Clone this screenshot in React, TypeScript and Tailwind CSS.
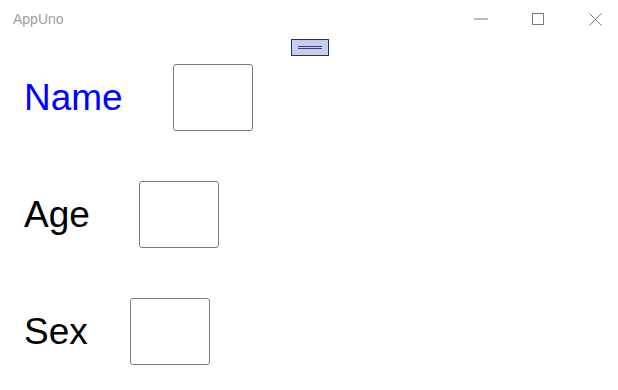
export default function App() {
  const rows = [
    { label: "Name", color: "text-[#0000ff]", w: "w-[99px]" },
    { label: "Age", color: "text-black", w: "w-[65px]" },
    { label: "Sex", color: "text-black", w: "w-[56px]" },
  ];

  return (
    <div className="relative h-[390px] w-[618px] overflow-hidden bg-white font-['Segoe_UI','Liberation_Sans',sans-serif]">
      {/* Title bar */}
      <div className="flex h-[38px] items-center justify-between">
        <span className="pl-[13px] text-[14px] leading-none text-[#a0a0a0]">AppUno</span>
        <div className="flex h-full items-center">
          <div className="flex h-full w-[46px] items-center justify-center">
            <svg width="14" height="2" viewBox="0 0 14 2">
              <path d="M0 1 H14" stroke="#7a7a7a" strokeWidth="1" />
            </svg>
          </div>
          <div className="ml-[11px] flex h-full w-[46px] items-center justify-center">
            <svg width="12" height="12" viewBox="0 0 12 12">
              <rect x="0.5" y="0.5" width="11" height="11" fill="none" stroke="#7a7a7a" strokeWidth="1" />
            </svg>
          </div>
          <div className="ml-[11px] flex h-full w-[46px] items-center justify-center">
            <svg width="13" height="13" viewBox="0 0 13 13">
              <path d="M0.5 0.5 L12.5 12.5 M12.5 0.5 L0.5 12.5" stroke="#7a7a7a" strokeWidth="1" />
            </svg>
          </div>
        </div>
      </div>

      {/* Small centred button */}
      <div className="flex justify-center pt-[1px]">
        <button className="ml-[1px] flex h-[17px] w-[38px] items-center justify-center border border-[#333333] bg-[#c6cdf0]">
          <span className="flex w-[24px] flex-col gap-[1px]">
            <span className="h-[1px] bg-[#3c4270]" />
            <span className="h-[1px] bg-[#3c4270]" />
          </span>
        </button>
      </div>

      {/* Form rows */}
      <div className="flex flex-col gap-[50px] pl-[24px] pt-[8px]">
        {rows.map((r) => (
          <div key={r.label} className="flex items-center gap-[50px]">
            <span className={`${r.w} whitespace-nowrap text-[37px] leading-none ${r.color}`}>{r.label}</span>
            <div className="h-[67px] w-[80px] rounded-[3px] border border-[#7a7a7a] bg-white" />
          </div>
        ))}
      </div>
    </div>
  );
}
